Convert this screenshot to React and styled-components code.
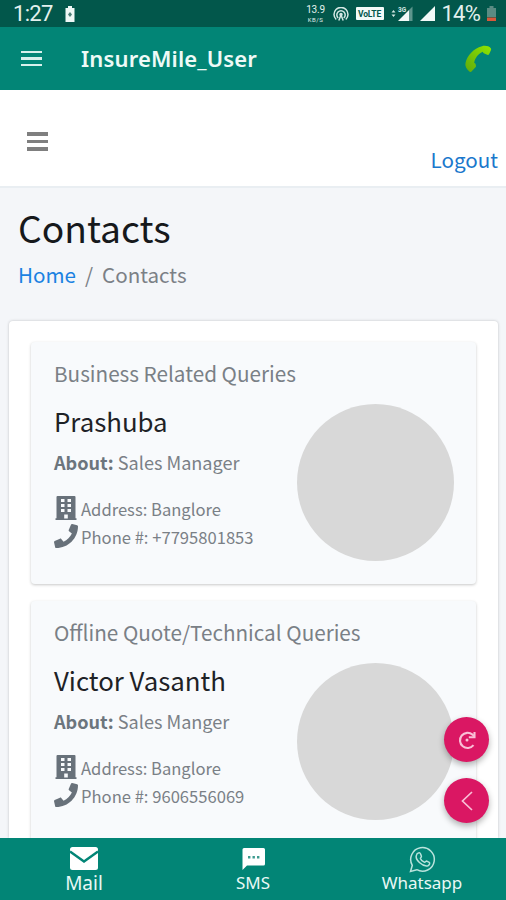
import React from 'react';
import styled, { createGlobalStyle } from 'styled-components';
import { FaPhone } from 'react-icons/fa';

const GlobalStyle = createGlobalStyle`
  * {
    box-sizing: border-box;
  }

  body {
    margin: 0;
    background: #f4f6f9;
    font-family: 'Noto Sans CJK SC', 'Noto Sans', sans-serif;
  }

  svg {
    display: block;
  }
`;

const Screen = styled.div`
  position: relative;
  display: flex;
  flex-direction: column;
  width: 506px;
  height: 900px;
  overflow: hidden;
`;

/* Android status bar */
const StatusBar = styled.div`
  display: flex;
  flex: none;
  justify-content: space-between;
  align-items: center;
  height: 27px;
  padding: 0 10px 0 13px;
  background: #02574b;
  color: #e3f1ee;
  font-family: Roboto, sans-serif;
`;

const StatusGroup = styled.div`
  display: flex;
  align-items: center;
  gap: ${(props) => props.$gap}px;
`;

const Clock = styled.span`
  font-size: 22px;
  line-height: 27px;
  letter-spacing: ${(props) => props.$spacing || 0}px;
`;

const NetSpeed = styled.div`
  display: flex;
  flex-direction: column;
  align-items: center;
  width: 20px;
`;

const NetValue = styled.span`
  font-size: 10px;
  line-height: 12px;
  letter-spacing: -0.2px;
`;

const NetUnit = styled.span`
  font-size: 6px;
  line-height: 8px;
  letter-spacing: 0.5px;
`;

const VolteBadge = styled.span`
  width: 28px;
  height: 13px;
  border-radius: 1px;
  background: #f2faf8;
  color: #02574b;
  font-size: 8.5px;
  font-weight: 700;
  line-height: 14px;
  letter-spacing: -0.2px;
  text-align: center;
`;

/* App header */
const AppBar = styled.header`
  display: flex;
  flex: none;
  align-items: center;
  height: 63px;
  padding: 0 14px 0 21px;
  background: #028576;
`;

const MenuLines = styled.div`
  display: flex;
  flex-direction: column;
  gap: ${(props) => props.$gap}px;
  width: 21px;

  span {
    height: ${(props) => props.$thick}px;
    background: ${(props) => props.$color};
  }
`;

const AppTitle = styled.h1`
  flex: 1;
  margin: 0 0 1px 39px;
  color: #eefaf7;
  font-family: 'Noto Sans', sans-serif;
  font-size: 22px;
  font-weight: 600;
  line-height: 30px;
  letter-spacing: 0.15px;
`;

/* Web page */
const Navbar = styled.nav`
  display: flex;
  flex: none;
  justify-content: space-between;
  align-items: flex-start;
  height: 98px;
  padding: 42px 8px 0 27px;
  border-bottom: 2px solid #e9eef2;
  background: #fff;
`;

const LogoutLink = styled.a`
  margin-top: 11px;
  color: #1a78cc;
  font-size: 20.6px;
  line-height: 32px;
`;

const PageHeader = styled.div`
  flex: none;
  height: 133px;
  padding: 15px 18px 0;
`;

const PageTitle = styled.h2`
  margin: 0;
  color: #16191c;
  font-size: 37.2px;
  font-weight: 400;
  line-height: 48px;
`;

const Breadcrumb = styled.div`
  display: flex;
  gap: 9px;
  margin-top: 7px;
  color: #7b8086;
  font-size: 20.6px;
  line-height: 32px;

  a {
    color: #1b82e2;
  }
`;

const Panel = styled.div`
  display: flex;
  flex: 1;
  flex-direction: column;
  gap: 16.5px;
  min-height: 0;
  margin: 0 8px 0 9px;
  padding: 21px 22px 0;
  overflow: hidden;
  border-radius: 4px 4px 0 0;
  background: #fff;
  box-shadow: 0 0 3px rgba(0, 0, 0, 0.22);
`;

const ContactCard = styled.div`
  flex: none;
  height: 242px;
  padding: 14px 23px 0;
  border-radius: 4px;
  background: #f8fafc;
  box-shadow: 0 1px 3px rgba(0, 0, 0, 0.22);
`;

const CardHeading = styled.div`
  color: #7a8086;
  font-size: 20.7px;
  line-height: 34px;
`;

const CardBody = styled.div`
  display: flex;
  justify-content: space-between;
  margin-top: 13px;
`;

const Name = styled.h3`
  margin: 0;
  color: #1e2226;
  font-size: 25.8px;
  font-weight: 400;
  line-height: 36px;
`;

const About = styled.p`
  margin: 9px 0 19px;
  color: #7a8086;
  font-size: 18.1px;
  line-height: 28px;

  b {
    color: #6c757d;
  }
`;

const DetailRow = styled.div`
  display: flex;
  align-items: center;
  height: 28px;
  color: #7a8086;
  font-size: 16.6px;
  line-height: 28px;
  white-space: nowrap;

  svg {
    width: 24px;
    height: 24px;
    margin: -2px 3px 0 0;
    color: #68717a;
  }
`;

const Avatar = styled.div`
  flex: none;
  width: 157px;
  height: 157px;
  margin: 1px -1px 0 0;
  border-radius: 50%;
  background: #d8d8d8;
`;

/* Buttons that float over the page */
const FloatingButtons = styled.div`
  position: absolute;
  top: 717px;
  right: 17px;
  display: flex;
  flex-direction: column;
  gap: 16px;
`;

const RoundButton = styled.button`
  display: grid;
  place-items: center;
  width: 45px;
  height: 45px;
  padding: 0;
  border: 0;
  border-radius: 50%;
  background: #da1763;
  box-shadow: 0 3px 6px rgba(0, 0, 0, 0.3);
`;

const BottomBar = styled.footer`
  position: relative;
  display: grid;
  flex: none;
  grid-template-columns: 168px 170px 168px;
  height: 62px;
  background: #028576;
`;

const BottomItem = styled.div`
  display: flex;
  flex-direction: column;
  align-items: center;
  padding-top: 8px;
  color: #e9f8f5;
  font-family: 'Noto Sans', sans-serif;
  font-size: ${(props) => props.$size}px;
  line-height: 24px;
`;

const BottomIcon = styled.div`
  display: grid;
  place-items: center;
  height: 25px;
`;

const contacts = [
  {
    heading: 'Business Related Queries',
    name: 'Prashuba',
    about: 'Sales Manager',
    address: 'Banglore',
    phone: '+7795801853',
  },
  {
    heading: 'Offline Quote/Technical Queries',
    name: 'Victor Vasanth',
    about: 'Sales Manger',
    address: 'Banglore',
    phone: '9606556069',
  },
];

const ChargingIcon = () => (
  <svg width="10" height="16" viewBox="0 0 10 16">
    <path d="M3 0h4v2h2.500v14h-9V2H3z" fill="#eef8f6" />
    <path d="M5 6L7 8.500L5 11L3 8.500z" fill="#4d7f77" />
  </svg>
);

const HotspotIcon = () => (
  <svg width="16" height="14" viewBox="0 0 16 14" fill="none" stroke="#d5e8e4" strokeWidth="1.500">
    <path d="M3.200 12.500A7 7 0 1 1 12.800 12.500" />
    <path d="M5.200 11A4.200 4.200 0 1 1 10.800 11" />
    <path d="M8 8L5.800 13.500M8 8L10.200 13.500" />
    <circle cx="8" cy="7.500" r="1" fill="#d5e8e4" />
  </svg>
);

const MobileDataIcon = () => (
  <svg width="22" height="17" viewBox="0 0 22 17">
    <path d="M0.500 7.500L2.500 5L4.500 7.500zM0.500 9.500L2.500 12L4.500 9.500z" fill="#d5e8e4" />
    <path d="M18 5L21.500 1.500V16H18z" fill="#5d958c" />
    <path d="M7 16L18 5V16z" fill="#f2faf8" />
    <text x="7" y="6.500" fontSize="6.500" fontWeight="700" fill="#d5e8e4">3G</text>
  </svg>
);

const SignalIcon = () => (
  <svg width="15" height="15" viewBox="0 0 15 15">
    <path d="M15 0V15H0z" fill="#f2faf8" />
  </svg>
);

const LowBatteryIcon = () => (
  <svg width="9" height="15" viewBox="0 0 9 15">
    <path d="M2.500 0h4v2H9v9H0V2h2.500z" fill="#5b8b83" />
    <path d="M0 11.500h9V15H0z" fill="#d9583b" />
  </svg>
);

const CallIcon = () => (
  <svg width="28" height="28" viewBox="0 0 28 28">
    <defs>
      <linearGradient id="call" x1="1" y1="0" x2="0" y2="1">
        <stop offset="0" stopColor="#8fe600" />
        <stop offset="1" stopColor="#5fa90c" />
      </linearGradient>
    </defs>
    <path
      d="M18 1.200C21 0.300 25 1 26.800 3.200C27.300 4 27.200 4.800 26.800 5.500L25.200 9C24.800 9.800 24 10.200 23.200 9.800L19.800 8.300C19.200 8 19 7.500 19 6.800C14.500 8.500 10.800 13 10.200 18C10.800 18 11.200 18.300 11.500 18.800L12 21C12 21.800 11.600 22.300 11 22.800L7.500 26.500C6.800 27.200 6 27.200 5.300 26.600C2.500 24 0.800 21 1.500 18C3.200 10.500 9.500 3.500 18 1.200z"
      fill="url(#call)"
    />
  </svg>
);

const BuildingIcon = () => (
  <svg viewBox="0 0 24 24">
    <path
      fill="currentColor"
      fillRule="evenodd"
      d="M3.500 0H20.500Q21.500 0 21.500 1V22.300H22.500V24H1.500V22.300H2.500V1Q2.500 0 3.500 0zM7 3V6H10.500V3zM13.500 3V6H17V3zM7 8V11H10.500V8zM13.500 8V11H17V8zM7 13V16H10.500V13zM13.500 13V16H17V13zM10.200 18.500V22.500H13.800V18.500z"
    />
  </svg>
);

const ReloadIcon = () => (
  <svg width="20" height="20" viewBox="0 0 20 20" fill="none" stroke="#f9bfd6" strokeWidth="2.100">
    <path d="M16.500 15.200A7.600 7.600 0 1 1 15.500 4.600L17.200 6.400" />
    <path d="M17.500 2V7.300H11.800" />
    <circle cx="10" cy="10" r="1.500" fill="#f9bfd6" stroke="none" />
  </svg>
);

const BackIcon = () => (
  <svg width="12" height="20" viewBox="0 0 12 20" fill="none" stroke="#f9bfd6" strokeWidth="1.700">
    <path d="M11 1L1.500 10L11 19" />
  </svg>
);

const MailIcon = () => (
  <svg width="28" height="23" viewBox="0 0 28 23">
    <rect width="28" height="23" rx="2.500" fill="#fff" />
    <path d="M0 4.500L14 14.500L28 4.500" fill="none" stroke="#028576" strokeWidth="2.400" />
  </svg>
);

const SmsIcon = () => (
  <svg width="23" height="22" viewBox="0 0 23 22">
    <path d="M2 0H21.500Q23 0 23 1.500V16Q23 17.500 21.500 17.500H5L0.500 22V1.500Q0.500 0 2 0z" fill="#fff" />
    <path d="M6 8h2.400v2.400H6zM10.500 8h2.400v2.400h-2.400zM15 8h2.400v2.400H15z" fill="#3d9b8f" />
  </svg>
);

const WhatsappIcon = () => (
  <svg width="27" height="27" viewBox="0 0 27 27" fill="none" stroke="#b9e3dc" strokeWidth="1.500">
    <path d="M1.500 25.500L3.300 19.300A11.800 11.800 0 1 1 7.800 23.700z" />
    <path d="M9 7.200C10.500 6.300 11.200 6.800 11.700 8.200L12.400 10.200C12.700 11 11.300 12 11.400 12.500C12 14.300 13.800 15.800 15.500 16.300C16.200 16.500 17 14.800 17.800 15.100L20.200 16.300C21.200 17 20.500 19 19 19.700C13.500 21 5.500 13.500 7.500 9C7.800 8.200 8.200 7.600 9 7.200z" />
  </svg>
);

const App = () => {
  return (
    <Screen>
      <GlobalStyle />
      <StatusBar>
        <StatusGroup $gap={12}>
          <Clock $spacing={-0.7}>1:27</Clock>
          <ChargingIcon />
        </StatusGroup>
        <StatusGroup $gap={7}>
          <NetSpeed>
            <NetValue>13.9</NetValue>
            <NetUnit>KB/S</NetUnit>
          </NetSpeed>
          <HotspotIcon />
          <VolteBadge>VoLTE</VolteBadge>
          <MobileDataIcon />
          <SignalIcon />
          <Clock $spacing={-0.8}>14%</Clock>
          <LowBatteryIcon />
        </StatusGroup>
      </StatusBar>

      <AppBar>
        <MenuLines $gap={4} $thick={2.5} $color="#d8f0ec">
          <span />
          <span />
          <span />
        </MenuLines>
        <AppTitle>InsureMile_User</AppTitle>
        <CallIcon />
      </AppBar>

      <Navbar>
        <MenuLines $gap={4} $thick={3.5} $color="#7f7f7f">
          <span />
          <span />
          <span />
        </MenuLines>
        <LogoutLink>Logout</LogoutLink>
      </Navbar>

      <PageHeader>
        <PageTitle>Contacts</PageTitle>
        <Breadcrumb>
          <a>Home</a>
          <span>/</span>
          <span>Contacts</span>
        </Breadcrumb>
      </PageHeader>

      <Panel>
        {contacts.map((contact) => (
          <ContactCard key={contact.name}>
            <CardHeading>{contact.heading}</CardHeading>
            <CardBody>
              <div>
                <Name>{contact.name}</Name>
                <About>
                  <b>About:</b> {contact.about}
                </About>
                <DetailRow>
                  <BuildingIcon />
                  Address: {contact.address}
                </DetailRow>
                <DetailRow>
                  <FaPhone />
                  Phone #: {contact.phone}
                </DetailRow>
              </div>
              <Avatar />
            </CardBody>
          </ContactCard>
        ))}
      </Panel>

      <FloatingButtons>
        <RoundButton>
          <ReloadIcon />
        </RoundButton>
        <RoundButton>
          <BackIcon />
        </RoundButton>
      </FloatingButtons>

      <BottomBar>
        <BottomItem $size={19}>
          <BottomIcon>
            <MailIcon />
          </BottomIcon>
          Mail
        </BottomItem>
        <BottomItem $size={17}>
          <BottomIcon>
            <SmsIcon />
          </BottomIcon>
          SMS
        </BottomItem>
        <BottomItem $size={17}>
          <BottomIcon>
            <WhatsappIcon />
          </BottomIcon>
          Whatsapp
        </BottomItem>
      </BottomBar>
    </Screen>
  );
};

export default App;
